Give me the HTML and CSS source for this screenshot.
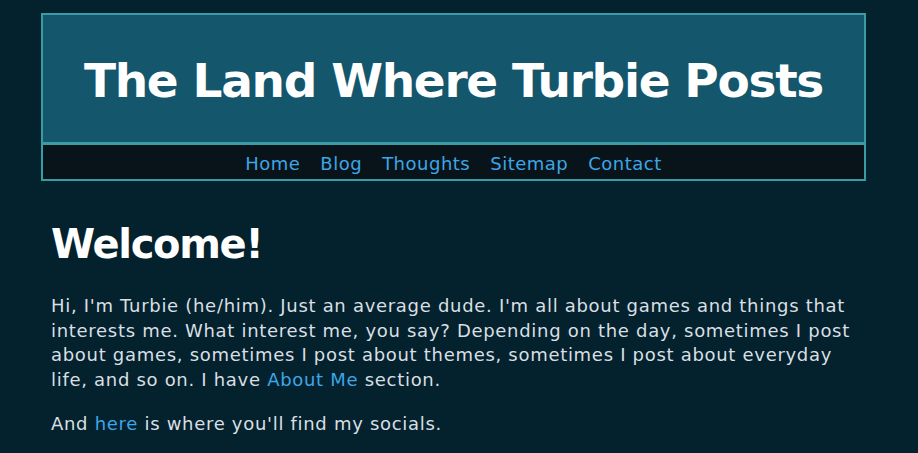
FILE: index.html
```html
<!doctype html>
<html lang="en">
  <head>
    <meta charset="UTF-8" />
    <meta name="viewport" content="width=device-width, initial-scale=1.0" />
    <title>The Land Where Turbie Posts</title>
    <link rel="stylesheet" href="styles.css">
  </head>
  <body>
    <div class="wrapper">
      <header class="site-header">
        <h1 class="site-title">The Land Where Turbie Posts</h1>
        <nav class="site-nav">
          <a href="#">Home</a>
          <a href="#">Blog</a>
          <a href="#">Thoughts</a>
          <a href="#">Sitemap</a>
          <a href="#">Contact</a>
        </nav>
      </header>

      <main class="content">
        <h2>Welcome!</h2>
        <p>Hi, I'm Turbie (he/him). Just an average dude. I'm all about games and things that interests me. What interest me, you say? Depending on the day, sometimes I post about games, sometimes I post about themes, sometimes I post about everyday life, and so on. I have <a href="#">About Me</a> section.</p>
        <p>And <a href="#">here</a> is where you'll find my socials.</p>
      </main>
    </div>
  </body>
</html>
```

FILE: styles.css
```css
body {
  margin: 0;
  background: #03222e;
  color: #d9dfe2;
  font-family: Verdana, "DejaVu Sans", sans-serif;
  font-size: 18px;
  letter-spacing: 0.7px;
}
a {
  color: #3ea6e6;
  text-decoration: none;
}
.wrapper {
  width: 825px;
  margin: 13px 0 0 41px;
}
.site-header {
  border: 2px solid #3a9ca3;
  background: #14566b;
}
.site-title {
  margin: 0;
  padding: 36px 0 31px;
  text-align: center;
  color: #fff;
  font-size: 47px;
  line-height: 60px;
  letter-spacing: -1.3px;
}
.site-nav {
  display: flex;
  justify-content: center;
  gap: 20px;
  padding: 7px 0 3px;
  border-top: 3px solid #3a9ca3;
  background: #08141a;
  line-height: 24px;
  letter-spacing: 0.5px;
}
.content {
  padding: 0 10px;
}
.content h2 {
  margin: 39px 0 26px;
  color: #fff;
  font-size: 40px;
  line-height: 48px;
  letter-spacing: -1.3px;
}
.content p {
  margin: 0 0 19px;
  line-height: 24.7px;
}
```
